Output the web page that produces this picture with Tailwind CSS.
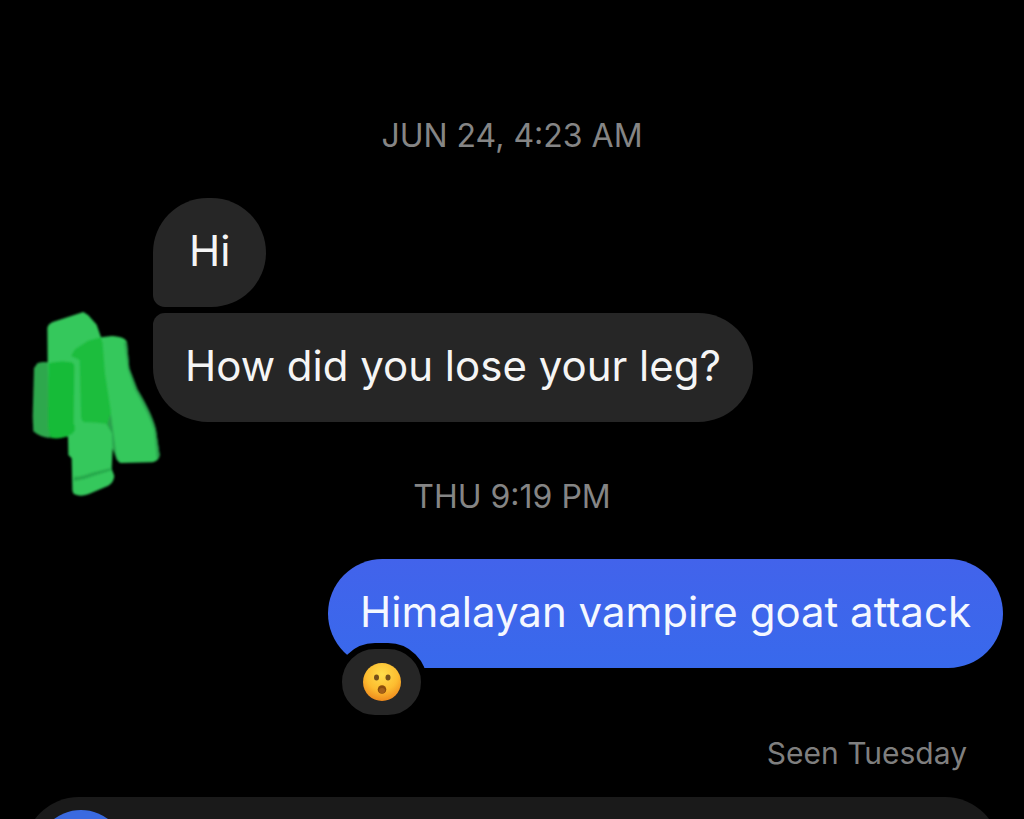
<!DOCTYPE html>
<html lang="en">
<head>
  <meta charset="UTF-8" />
  <meta name="viewport" content="width=device-width, initial-scale=1.0"/>
  <title>Chat</title>
  <script src="https://cdn.jsdelivr.net/npm/@tailwindcss/browser@4"></script>
</head>
<body class="bg-black font-['Inter',sans-serif]">

  <main class="flex h-screen flex-col overflow-hidden pt-[116px]">

    <time class="block text-center text-[32px] leading-10 text-[#858585]">JUN 24, 4:23 AM</time>

    <!-- Received messages -->
    <section class="mt-[42px] flex shrink-0">
      <div class="relative w-[153px] shrink-0">
        <!-- Scribbled-out avatar -->
        <svg class="absolute top-[102px] left-5 z-10 h-[210px] w-40" viewBox="0 0 480 630" aria-hidden="true">
          <defs>
            <filter id="soft"><feGaussianBlur stdDeviation="3" /></filter>
          </defs>
          <g filter="url(#soft)">
            <path fill="#2da84e" d="M52 190 Q70 183 90 188 L90 414 Q60 412 40 394 L38 350 L42 205 Z" />
            <path fill="#34c85c" d="M82 84 Q84 72 98 66 L190 36 L205 46 L230 74 L243 112 L275 108 Q318 110 321 128 L328 205 L352 268 Q398 345 408 390 L419 466 Q417 482 398 487 L302 489 Q292 486 289 470 L278 445 L275 506 L283 528 Q281 548 265 557 L205 583 Q180 592 162 582 Q156 577 157 560 L155 475 L145 465 L144 410 L90 400 L83 190 Z" />
            <path fill="#16bb37" d="M86 190 Q120 181 154 187 Q164 190 163 205 L161 370 Q170 390 158 400 Q132 420 92 414 L84 380 Z" />
            <path fill="#1fbd3d" d="M153 168 L165 148 L204 122 L243 112 L248 130 L255 220 L272 330 L277 400 L258 371 Q218 365 192 367 Q182 362 183 340 L179 180 Z" />
            <path fill="#28a94b" d="M162 530 Q180 532 215 518 L276 503 L276 511 L220 528 Q190 540 162 544 Z" />
            <path fill="#2ba04d" d="M312 125 L321 128 L328 205 L352 268 Q398 345 408 390 L419 466 L411 480 L402 390 Q388 345 345 270 L324 210 Z" />
            <path fill="#2ba04d" d="M262 372 L272 340 L290 470 L300 486 L290 480 L278 445 L276 400 Z" />
          </g>
        </svg>
      </div>
      <div class="flex flex-col items-start gap-1.5">
        <p class="rounded-[55px] rounded-bl-xl bg-[#262626] px-9 pt-[25px] pb-7 text-[42px] leading-14 text-[#f5f5f5]">Hi</p>
        <p class="rounded-[55px] rounded-tl-xl bg-[#262626] px-8 pt-[25px] pb-7 text-[42px] leading-14 text-[#f5f5f5]">How did you lose your leg?</p>
      </div>
    </section>

    <time class="mt-[55px] block text-center text-[32px] leading-10 text-[#858585]">THU 9:19 PM</time>

    <!-- Sent message -->
    <section class="mt-[42px] mr-[21px] flex shrink-0 flex-col items-end">
      <div class="relative">
        <p class="rounded-[55px] bg-linear-to-b from-[#4263eb] to-[#3869ec] px-8 pt-[25px] pb-7 text-[42px] leading-14 text-[#f5f8ff]">Himalayan vampire goat attack</p>
        <button type="button" aria-label="Reaction: surprised" class="absolute top-[84px] left-2 flex h-[78px] w-[91px] items-center justify-center rounded-[39px] border-6 border-black bg-[#262626]">
          <svg class="size-10" viewBox="0 0 40 40" aria-hidden="true">
            <defs>
              <radialGradient id="face" cx="50%" cy="30%" r="70%">
                <stop offset="0" stop-color="#ffdd4b" />
                <stop offset="0.6" stop-color="#fdbd30" />
                <stop offset="1" stop-color="#ee8a1d" />
              </radialGradient>
            </defs>
            <circle cx="20" cy="20" r="19" fill="url(#face)" />
            <ellipse cx="14.5" cy="15.5" rx="2.5" ry="3" fill="#75501a" />
            <ellipse cx="26" cy="15.5" rx="2.5" ry="3" fill="#75501a" />
            <ellipse cx="20" cy="27.5" rx="4.3" ry="4.3" fill="#8a4c0c" />
            <ellipse cx="20" cy="28.5" rx="3" ry="2.6" fill="#a4601a" />
          </svg>
        </button>
      </div>
    </section>

    <p class="mt-[67px] mr-[57px] text-right text-[30px] leading-9 text-[#7f7f7f]">Seen Tuesday</p>

    <!-- Composer -->
    <footer class="mx-6 mt-[26px] h-[110px] shrink-0 rounded-[55px] bg-[#1a1a1a] px-3 pt-[13px]">
      <button type="button" aria-label="Camera" class="block size-[90px] rounded-full bg-[#3a6ae0]"></button>
    </footer>

  </main>

</body>
</html>
